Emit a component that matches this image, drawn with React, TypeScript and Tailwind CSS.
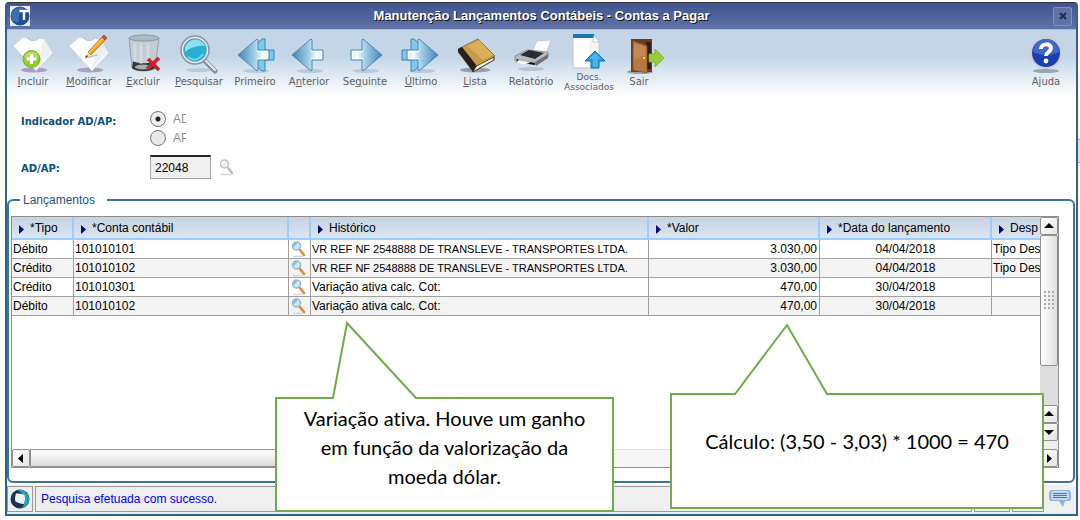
import type { ReactNode } from 'react';

/* ---------- Icons ---------- */

function Shirt() {
  return (
    <>
      <ellipse cx="21" cy="36" rx="13" ry="2.5" fill="#75618a" opacity="0.5" />
      <path d="M0 12 10 3l5 1c2 2 7 3 10 0l6 1 9 14-17 18Z" fill="#fdfdfe" stroke="#c9ccd4" strokeWidth="0.8" />
      <path d="M14 3c2 4 9 5 12 1" fill="none" stroke="#b7bbc6" />
      <path d="m31 5 8 13-16 16Z" fill="#eceef3" />
    </>
  );
}

function AddIcon() {
  return (
    <svg viewBox="0 0 40 40" className="size-10">
      <Shirt />
      <circle cx="18.500" cy="25" r="8.500" fill="#8fce2b" stroke="#73b71b" />
      <path d="M11 23a8 8 0 0 1 15 0c-4 2-10 3-15 0Z" fill="#b6e262" opacity="0.8" />
      <path d="M18.500 20v10M13.500 25h10" stroke="#fff" strokeWidth="3.200" />
    </svg>
  );
}

function EditIcon() {
  return (
    <svg viewBox="0 0 40 40" className="size-10">
      <Shirt />
      <path d="m16 24 12-3" stroke="#a9abb2" strokeWidth="1.500" opacity="0.7" />
      <path d="m16 24 3-6 3 3Z" fill="#f4d9a8" />
      <path d="m16 24 1.500-3 1.500 1.500Z" fill="#333" />
      <path d="M19 18 33 3l3 3-14 15Z" fill="#f7a81c" stroke="#a8620c" strokeWidth="0.700" />
      <path d="M20 19 34 4" stroke="#ffd873" />
      <path d="m33 3 2-2 3 3-2 2Z" fill="#cf5656" stroke="#8e3434" strokeWidth="0.700" />
    </svg>
  );
}

function TrashIcon() {
  return (
    <svg viewBox="0 0 40 40" className="size-10">
      <path d="M6 4 9 34c3 4 20 4 23 0l4-30Z" fill="#c3ccd3" stroke="#98a1a8" />
      <path d="M10 27c5 3 18 3 23 0l-1 7c-4 4-19 4-23 0Z" fill="#33373a" />
      <ellipse cx="20" cy="33" rx="8" ry="2.500" fill="#a8aeb1" />
      <path d="M12 9v19M18 9v21M25 9v20" stroke="#e3e9ed" strokeWidth="3" opacity="0.5" />
      <ellipse cx="21" cy="4" rx="15" ry="3" fill="#aeb8c0" stroke="#8d979f" />
      <path d="m25 25 11 11M36 24 24 35" stroke="#d81e28" strokeWidth="3.600" />
    </svg>
  );
}

function SearchIcon() {
  return (
    <svg viewBox="0 0 40 40" className="size-10">
      <ellipse cx="20" cy="36" rx="13" ry="2" fill="#9fb0bd" opacity="0.5" />
      <path d="m26 27 10 10" stroke="#858f96" strokeWidth="5" strokeLinecap="round" />
      <path d="m26 26 10 10" stroke="#e6eaed" strokeWidth="2" strokeLinecap="round" />
      <circle cx="16" cy="16" r="13" fill="#2aaed3" stroke="#8b969d" strokeWidth="3.500" />
      <circle cx="16" cy="16" r="12.500" fill="none" stroke="#e5eaed" strokeWidth="1.500" />
      <path d="M6 18a10.500 10.500 0 0 1 20-6C20 11 12 13 6 18Z" fill="#8cdff0" />
      <path d="M9 23c5 4 11 3 15-3" fill="none" stroke="#6ad4ea" strokeWidth="2" />
    </svg>
  );
}

function ArrowIcon({ flip = false, double = false }: { flip?: boolean; double?: boolean }) {
  const id = `arrow-${flip ? 'r' : 'l'}${double ? '2' : '1'}`;
  return (
    <svg viewBox="0 0 40 40" className="size-10">
      <defs>
        <linearGradient id={id} x1="0" x2="1" y1="0" y2="0">
          <stop offset="0" stopColor="#3c85b8" />
          <stop offset="0.550" stopColor="#a6d0e8" />
          <stop offset="0.800" stopColor="#f3fbff" />
          <stop offset="1" stopColor="#d5ebf7" />
        </linearGradient>
      </defs>
      <ellipse cx="21" cy="37" rx="13" ry="2" fill="#8095a8" opacity="0.35" />
      <g transform={flip ? 'matrix(-1 0 0 1 40 0)' : undefined}>
        {double && (
          <path d="M10 21 27 5h3v11h9v10h-9v11h-3Z" fill="#7cc8f0" stroke="#3d86b6" />
        )}
        <path d="M3 21 22 5l1 1v10h11v10H23v10l-1 1Z" fill={`url(#${id})`} stroke="#4f87ad" />
        <path d="M22 17.500h10.500v7H22" fill="none" stroke="#fff" opacity="0.8" />
      </g>
    </svg>
  );
}

function BookIcon() {
  return (
    <svg viewBox="0 0 40 40" className="size-10">
      <ellipse cx="20" cy="36" rx="15" ry="2.500" fill="#5e6a75" opacity="0.55" />
      <path d="m17 34 22-11v3L18 38Z" fill="#f4f0e4" stroke="#3d2b16" />
      <path d="M3 15 23 5l17 17-22 12Z" fill="#c99a48" stroke="#7b5724" strokeWidth="0.700" />
      <path d="M12 12 24 6l14 15-10 5Z" fill="#e3b866" opacity="0.65" />
      <path d="m3 15 4-2 15 19-4 6L3 18Z" fill="#2a211c" />
    </svg>
  );
}

function PrinterIcon() {
  return (
    <svg viewBox="0 0 40 40" className="size-10">
      <ellipse cx="20" cy="35" rx="13" ry="2" fill="#8495a3" opacity="0.4" />
      <path d="m22 16 4-9 14-1-6 17Z" fill="#fbfcfe" stroke="#b9bec7" strokeWidth="0.700" />
      <path d="m4 22 12-6 21 2v5l-12 8-21-4Z" fill="#b8bcc0" stroke="#74797d" strokeWidth="0.700" />
      <path d="m9 21 9-5 15 3-9 6Z" fill="#292d31" />
      <path d="m24 28 13-8v4l-12 8Z" fill="#6f7478" />
      <path d="m5 25 19 4v2l-17-3Z" fill="#15181b" />
      <path d="m8 26 11 2-6 3-8-2Z" fill="#fff" stroke="#c2c6cb" strokeWidth="0.500" />
    </svg>
  );
}

function DocsIcon() {
  return (
    <svg viewBox="0 0 40 40" className="size-10">
      <path d="M4 1h21l5 7v26H4Z" fill="#f2f4f6" stroke="#c5cbd1" />
      <path d="M5 6h15v27H5Z" fill="#fff" />
      <path d="M4 0h21l2 4H4Z" fill="#1877ac" />
      <path d="m25 1 5 7h-6Z" fill="#fff" stroke="#aeb6be" strokeWidth="0.600" />
      <path d="m26 17 10 10h-6v7h-8v-7h-6Z" fill="#29a0e4" stroke="#1571ae" />
      <path d="m26 19 6 6h-3v8h-5v-8h-4Z" fill="#5bbcf0" opacity="0.7" />
    </svg>
  );
}

function ExitIcon() {
  return (
    <svg viewBox="0 0 40 40" className="size-10 overflow-visible">
      <ellipse cx="21" cy="38" rx="13" ry="2" fill="#4f5c67" opacity="0.5" />
      <path d="M12 5h21v33H12Z" fill="#69401f" />
      <path d="M27 8h5v27h-5Z" fill="#2f2115" />
      <path d="m14 7 14 5v27l-14-3Z" fill="#b9783f" stroke="#8c5527" strokeWidth="0.700" />
      <path d="m15 9 11 4v8l-11 5Z" fill="#cd935b" opacity="0.6" />
      <circle cx="25" cy="24" r="1.200" fill="#f7cf51" />
      <path d="M30 20h6v-5l9 9-9 9v-5h-6Z" fill="#93ce3d" stroke="#76b029" strokeWidth="0.800" />
    </svg>
  );
}

function HelpIcon() {
  return (
    <svg viewBox="0 0 40 40" className="size-10">
      <ellipse cx="20" cy="37" rx="13" ry="2" fill="#5a6470" opacity="0.5" />
      <circle cx="20" cy="19" r="15" fill="#1b3fae" stroke="#c9ced8" strokeWidth="2" />
      <path d="M7 18a13 13 0 0 1 26 0c-6 4-18 4-26 0Z" fill="#5577d4" opacity="0.7" />
      <path d="M15 15c0-6 10-6 10-1 0 4-5 4-5 8" fill="none" stroke="#fff" strokeWidth="4" />
      <circle cx="20" cy="27" r="2.400" fill="#fff" />
    </svg>
  );
}

function LensIcon({ muted = false }: { muted?: boolean }) {
  return (
    <svg viewBox="0 0 16 17" className="h-[17px] w-4">
      <path d="M2 15.500h10" stroke="#d5d5d5" strokeWidth="1.500" />
      <path d="m9 9 4 5" stroke={muted ? '#bcbcbc' : '#e08a2c'} strokeWidth="2.500" strokeLinecap="round" />
      <circle cx="5.500" cy="5" r="4" fill={muted ? '#efefef' : '#c5ebfa'} stroke={muted ? '#c2c2c2' : '#a3b1bb'} strokeWidth="1.500" />
      <path d="M3 5.500c0-2 1-3 3-3" fill="none" stroke={muted ? '#fff' : '#62bce6'} strokeWidth="1.500" />
    </svg>
  );
}

function LogoIcon() {
  return (
    <svg viewBox="0 0 20 20" className="size-5">
      <rect width="20" height="20" fill="#e8edf6" />
      <circle cx="10" cy="10" r="9.500" fill="#1d4f94" />
      <path d="M1 9C3 2 10 0 14 2 9 5 8 10 9 16 4 17 1 14 1 9Z" fill="#5285bf" opacity="0.6" />
      <path d="M9.500 5H19M14 5v9" stroke="#fff" strokeWidth="2.500" />
    </svg>
  );
}

function OrbIcon() {
  return (
    <svg viewBox="0 0 20 20" className="size-5">
      <circle cx="10" cy="10" r="9.500" fill="#1b3350" />
      <path d="M7 1c8-2 13 5 12 11-1 4-4 7-8 7 5-3 6-13-4-18Z" fill="#27a0b8" />
      <path d="M6 4.500c3 0 6 0 8.500 1.500 1 3 .5 6-.5 9-3 0-6-1-8.500-2.500-.8-2-.5-5 .5-8Z" fill="#eef5f9" />
    </svg>
  );
}

function ChatIcon() {
  return (
    <svg viewBox="0 0 22 19" className="h-[19px] w-[22px]">
      <path d="M3 1h16c3 0 3 3 3 6s0 5-3 5h-3l-2 6-4-6H3c-3 0-3-2-3-5s0-6 3-6Z" fill="#8db4e2" />
      <rect x="2" y="2" width="18" height="9" rx="3" fill="#c3d8f0" />
      <path d="M4 4.500h14M4 6.500h14M4 8.500h14" stroke="#66707e" />
    </svg>
  );
}

/* ---------- Toolbar ---------- */

type Tool = { name: string; width: string; label: ReactNode; icon: ReactNode };

const tools: Tool[] = [
  { name: 'Incluir', width: 'w-13', label: <><u>I</u>ncluir</>, icon: <AddIcon /> },
  { name: 'Modificar', width: 'w-15', label: <><u>M</u>odificar</>, icon: <EditIcon /> },
  { name: 'Excluir', width: 'w-12', label: <><u>E</u>xcluir</>, icon: <TrashIcon /> },
  { name: 'Pesquisar', width: 'w-16', label: <><u>P</u>esquisar</>, icon: <SearchIcon /> },
  { name: 'Primeiro', width: 'w-12', label: 'Primeiro', icon: <ArrowIcon double /> },
  { name: 'Anterior', width: 'w-15', label: <>A<u>n</u>terior</>, icon: <ArrowIcon /> },
  { name: 'Seguinte', width: 'w-13', label: <>Se<u>g</u>uinte</>, icon: <ArrowIcon flip /> },
  { name: 'Último', width: 'w-15', label: <><u>Ú</u>ltimo</>, icon: <ArrowIcon flip double /> },
  { name: 'Lista', width: 'w-12', label: <><u>L</u>ista</>, icon: <BookIcon /> },
  { name: 'Relatório', width: 'w-16', label: 'Relatório', icon: <PrinterIcon /> },
  { name: 'Docs. Associados', width: 'w-13', label: <>Docs.<br />Associados</>, icon: <DocsIcon /> },
  { name: 'Sair', width: 'w-12', label: 'Sair', icon: <ExitIcon /> },
];

function ToolButton({ tool }: { tool: Tool }) {
  const twoLines = tool.name.startsWith('Docs');
  return (
    <button
      type="button"
      className={`${tool.width} flex shrink-0 flex-col items-center font-['DejaVu_Sans',sans-serif] text-[10px] leading-[10px] whitespace-nowrap text-[#5c6066]`}
    >
      {tool.icon}
      <span className={twoLines ? '-mt-[2px] text-[9px]' : 'pt-[3px]'}>{tool.label}</span>
    </button>
  );
}

/* ---------- Grid ---------- */

const columns = ['*Tipo', '*Conta contábil', '', 'Histórico', '*Valor', '*Data do lançamento', 'Desp'];

const rows = [
  { tipo: 'Débito', conta: '101010101', historico: 'VR REF NF 2548888 DE TRANSLEVE - TRANSPORTES LTDA.', valor: '3.030,00', data: '04/04/2018', despesa: 'Tipo Des' },
  { tipo: 'Crédito', conta: '101010102', historico: 'VR REF NF 2548888 DE TRANSLEVE - TRANSPORTES LTDA.', valor: '3.030,00', data: '04/04/2018', despesa: 'Tipo Des' },
  { tipo: 'Crédito', conta: '101010301', historico: 'Variação ativa calc. Cot:', valor: '470,00', data: '30/04/2018', despesa: '' },
  { tipo: 'Débito', conta: '101010102', historico: 'Variação ativa calc. Cot:', valor: '470,00', data: '30/04/2018', despesa: '' },
];

function EntriesTable() {
  const cell = 'border-r border-b border-[#a0a0a0] px-px';
  return (
    <table className="w-[1180px] table-fixed border-separate border-spacing-0 text-xs leading-[18px] whitespace-nowrap text-black">
      <colgroup>
        <col className="w-[62px]" />
        <col className="w-[215px]" />
        <col className="w-[22px]" />
        <col className="w-[338px]" />
        <col className="w-[171px]" />
        <col className="w-[172px]" />
        <col />
      </colgroup>
      <thead>
        <tr>
          {columns.map((title, i) => (
            <th
              key={i}
              className="h-[23px] border-r-2 border-b-2 border-[#99ccff] bg-linear-to-b from-[#c5d3e3] to-[#dbe5f0] p-0 text-left font-normal"
            >
              {title && (
                <span className="flex items-center gap-[6px] pl-[7px]">
                  <svg viewBox="0 0 5 9" className="mt-1 h-[9px] w-[5px] shrink-0">
                    <path d="M0 0v9l5-4.500Z" fill="#00007b" />
                  </svg>
                  {title}
                </span>
              )}
            </th>
          ))}
        </tr>
      </thead>
      <tbody>
        {rows.map((row, i) => (
          <tr key={i} className="h-[19px] bg-white even:bg-[#f3f3f3]">
            <td className={cell}>{row.tipo}</td>
            <td className={cell}>{row.conta}</td>
            <td className="border-r border-b border-[#a0a0a0] p-0">
              <button type="button" aria-label={`Pesquisar conta ${row.conta}`} className="block pl-[2px]">
                <LensIcon />
              </button>
            </td>
            {/* históricos longos usam letra menor para caber na coluna */}
            <td className={`${cell} ${row.historico.length > 40 ? 'text-[11px]' : ''}`}>{row.historico}</td>
            <td className="border-r border-b border-[#a0a0a0] px-[2px] text-right">{row.valor}</td>
            <td className={`${cell} text-center`}>{row.data}</td>
            <td className={cell}>{row.despesa}</td>
          </tr>
        ))}
      </tbody>
    </table>
  );
}

const arrows = {
  up: 'M0 6h10L5 1Z',
  down: 'M0 2h10L5 7Z',
  left: 'M7 0v9L2 4.500Z',
  right: 'M3 0v9l5-4.500Z',
};

function ScrollButton({ dir, label }: { dir: keyof typeof arrows; label: string }) {
  return (
    <button
      type="button"
      aria-label={label}
      className="flex size-[18px] shrink-0 items-center justify-center rounded-xs border border-[#909090] bg-linear-to-br from-white to-[#e4e4e4]"
    >
      <svg viewBox="0 0 10 9" className="h-[9px] w-[10px]">
        <path d={arrows[dir]} fill="#000" />
      </svg>
    </button>
  );
}

/* ---------- Callouts ---------- */

function Callout({ className, tail, children }: { className: string; tail: ReactNode; children: ReactNode }) {
  return (
    <div className={`absolute flex justify-center border-2 border-[#70ad47] bg-white text-center font-['Lato',sans-serif] text-[20px] leading-[29px] text-black [font-variant-ligatures:none] ${className}`}>
      {tail}
      {children}
    </div>
  );
}

export default function App() {
  return (
    <div className="relative flex min-h-screen flex-col overflow-hidden bg-white pt-[2px] pr-[2px] pb-[5px] pl-[5px] font-['Liberation_Sans',Arial,sans-serif]">
      {/* Borda da janela de trás */}
      <div className="absolute top-[139px] right-0 h-6 w-[2px] border-y border-[#7db4e6] bg-[#cfe3f7]" />

      <div className="flex grow flex-col rounded-t-sm border-2 border-t border-[#2b6490] border-t-[#333] bg-white">
        {/* Barra de título */}
        <header className="flex h-[27px] items-center border-b border-[#a9b9d6] bg-linear-to-b from-[#40548f] to-[#6072a6] pr-1 pl-[3px]">
          <LogoIcon />
          <h1 className="grow text-center text-[13px] font-bold text-white [text-shadow:1px_1px_0_#111]">
            Manutenção Lançamentos Contábeis - Contas a Pagar
          </h1>
          <button
            type="button"
            aria-label="Fechar"
            className="flex size-[19px] items-center justify-center rounded-xs border border-[#8291bb] bg-[#6072a5]"
          >
            <svg viewBox="0 0 8 8" className="size-2">
              <path d="m1 1 6 6M7 1 1 7" stroke="#242b45" strokeWidth="2" />
            </svg>
          </button>
        </header>

        {/* Barra de ferramentas */}
        <nav className="flex h-[66px] items-start bg-linear-to-b from-[#c3d5e7] from-40% to-white pt-1 pr-1">
          {tools.map((tool) => (
            <ToolButton key={tool.name} tool={tool} />
          ))}
          <div className="ml-auto">
            <ToolButton tool={{ name: 'Ajuda', width: 'w-13', label: 'Ajuda', icon: <HelpIcon /> }} />
          </div>
        </nav>

        {/* Filtros */}
        <form className="flex flex-col pt-[15px] pl-[14px] text-xs" onSubmit={(e) => e.preventDefault()}>
          <div className="flex" role="radiogroup" aria-labelledby="indicador">
            <span id="indicador" className="w-[129px] pt-[3px] font-['DejaVu_Sans',sans-serif] text-[10px] leading-4 font-bold text-[#0b4f7d]">
              Indicador AD/AP:
            </span>
            <div className="flex flex-col gap-[3px] text-[#8c8c8c]">
              {['AD', 'AP'].map((option) => (
                <label key={option} className="flex h-4 items-center gap-[7px]">
                  <input
                    type="radio"
                    name="indicador"
                    defaultChecked={option === 'AD'}
                    className="size-4 appearance-none rounded-full border border-[#747474] bg-[#e9e9e9] checked:bg-[radial-gradient(circle,#222_0_2px,#ececec_3px)]"
                  />
                  <span className="w-[13px] overflow-hidden">{option}</span>
                </label>
              ))}
            </div>
          </div>
          <div className="flex items-center pt-[9px]">
            <label htmlFor="adap" className="w-[129px] pt-1 font-['DejaVu_Sans',sans-serif] text-[10px] font-bold text-[#0b4f7d]">
              AD/AP:
            </label>
            <input
              id="adap"
              readOnly
              defaultValue="22048"
              className="h-6 w-[61px] border border-t-2 border-[#a5a5a5] border-t-[#222] bg-[#efefef] px-1 text-black"
            />
            <button type="button" aria-label="Pesquisar AD/AP" className="ml-2">
              <LensIcon muted />
            </button>
          </div>
        </form>

        {/* Lançamentos */}
        <fieldset className="mr-px mt-[13px] min-w-0 grow rounded-md border-2 border-[#3a7596] px-[2px] pb-[13px]">
          <legend className="ml-[9px] pr-3 pl-[3px] text-xs leading-4 text-[#17557f]">Lançamentos</legend>
          <div className="mt-2 mr-3 border border-[#8d8d8d]">
            <div className="flex min-h-[232px]">
              <div className="min-w-0 grow basis-0 overflow-hidden">
                <EntriesTable />
              </div>
              <div className="flex w-[18px] shrink-0 flex-col bg-[#efefef]">
                <ScrollButton dir="up" label="Rolar para cima" />
                <div className="flex h-[131px] items-center justify-center rounded-xs border border-[#8f8f8f] bg-linear-to-r from-white to-[#dedede]">
                  <div className="h-[21px] w-3 bg-[radial-gradient(circle,#aaa_1px,transparent_1px)] bg-size-[4px_4px]" />
                </div>
                <div className="grow bg-[radial-gradient(circle,#ddd_1px,#f7f7f7_1px)] bg-size-[2px_2px]" />
                <ScrollButton dir="up" label="Linha anterior" />
                <ScrollButton dir="down" label="Próxima linha" />
                <div className="h-2" />
              </div>
            </div>
            <div className="flex h-[18px] bg-[#f7f7f7]">
              <ScrollButton dir="left" label="Rolar para a esquerda" />
              <div className="w-[560px] border border-[#8f8f8f] bg-linear-to-b from-white to-[#dcdcdc]" />
              <div className="grow border-t border-dotted border-[#ccc] bg-[#f6f6f6]" />
              <ScrollButton dir="right" label="Rolar para a direita" />
            </div>
          </div>
        </fieldset>

        {/* Barra de status */}
        <footer className="mt-[2px] flex h-[29px] items-center gap-[2px] bg-[#efefef] pr-[5px] pb-[2px]">
          <div className="flex h-[26px] w-[26px] items-center justify-center border border-[#999]">
            <OrbIcon />
          </div>
          <output className="flex h-[26px] grow items-center border border-[#999] pl-[5px] text-xs text-[#0000f0]">
            Pesquisa efetuada com sucesso.
          </output>
          <div className="h-[26px] w-9 border border-[#999]" />
          <div className="h-[26px] w-8 border border-[#999]" />
          <button type="button" aria-label="Mensagens" className="ml-[3px]">
            <ChatIcon />
          </button>
        </footer>
      </div>

      <Callout
        className="top-[397px] left-[275px] h-[115px] w-[339px] px-5 pt-[5px]"
        tail={
          <svg viewBox="0 0 88 80" className="absolute -top-[79px] left-[53px] h-20 w-[88px]">
            <path d="M3 79 17 3l69 76Z" fill="#fff" />
            <path d="M2 78h1L17 3l69 75h2" fill="none" stroke="#70ad47" strokeWidth="2" />
          </svg>
        }
      >
        <p>Variação ativa. Houve um ganho em função da valorização da moeda dólar.</p>
      </Callout>

      <Callout
        className="top-[393px] left-[670px] h-[116px] w-[374px] items-center pb-5"
        tail={
          <svg viewBox="0 0 98 74" className="absolute -top-[73px] left-[60px] h-[74px] w-[98px]">
            <path d="M3 73 54 3l41 70Z" fill="#fff" />
            <path d="M1 72h2L55 3l40 69h2" fill="none" stroke="#70ad47" strokeWidth="2" />
          </svg>
        }
      >
        <p>Cálculo: (3,50 - 3,03) * 1000 = 470</p>
      </Callout>
    </div>
  );
}
